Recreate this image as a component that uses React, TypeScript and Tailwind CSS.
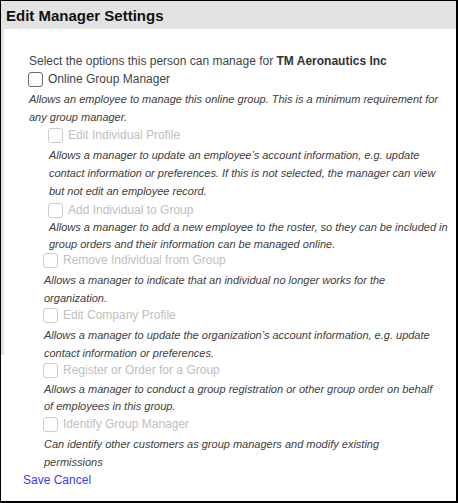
import React from "react";

type Item = {
  label: string;
  indent: string;
  rowMt: string;
  descMt: string;
  leading: string;
  rowH: string;
  desc: string[];
  enabled?: boolean;
};

const items: Item[] = [
  {
    label: "Online Group Manager",
    indent: "pl-[24px]",
    rowMt: "mt-0",
    descMt: "mt-[2px]",
    leading: "leading-[18px]",
    rowH: "h-[18px]",
    desc: [
      "Allows an employee to manage this online group. This is a minimum requirement for",
      "any group manager.",
    ],
    enabled: true,
  },
  {
    label: "Edit Individual Profile",
    indent: "pl-[44px]",
    rowMt: "mt-0",
    descMt: "mt-[2px]",
    leading: "leading-[18px]",
    rowH: "h-[18px]",
    desc: [
      "Allows a manager to update an employee\u2019s account information, e.g. update",
      "contact information or preferences. If this is not selected, the manager can view",
      "but not edit an employee record.",
    ],
  },
  {
    label: "Add Individual to Group",
    indent: "pl-[44px]",
    rowMt: "mt-[1px]",
    descMt: "mt-0",
    leading: "leading-[17px]",
    rowH: "h-[18px]",
    desc: [
      "Allows a manager to add a new employee to the roster, so they can be included in",
      "group orders and their information can be managed online.",
    ],
  },
  {
    label: "Remove Individual from Group",
    indent: "pl-[39px]",
    rowMt: "mt-[-1px]",
    descMt: "mt-[3px]",
    leading: "leading-[18px]",
    rowH: "h-[16px]",
    desc: [
      "Allows a manager to indicate that an individual no longer works for the",
      "organization.",
    ],
  },
  {
    label: "Edit Company Profile",
    indent: "pl-[39px]",
    rowMt: "mt-0",
    descMt: "mt-[3px]",
    leading: "leading-[18px]",
    rowH: "h-[16px]",
    desc: [
      "Allows a manager to update the organization\u2019s account information, e.g. update",
      "contact information or preferences.",
    ],
  },
  {
    label: "Register or Order for a Group",
    indent: "pl-[39px]",
    rowMt: "mt-0",
    descMt: "mt-[3px]",
    leading: "leading-[17px]",
    rowH: "h-[16px]",
    desc: [
      "Allows a manager to conduct a group registration or other group order on behalf",
      "of employees in this group.",
    ],
  },
  {
    label: "Identify Group Manager",
    indent: "pl-[39px]",
    rowMt: "mt-[1px]",
    descMt: "mt-[3px]",
    leading: "leading-[18px]",
    rowH: "h-[16px]",
    desc: [
      "Can identify other customers as group managers and modify existing",
      "permissions",
    ],
  },
];

function Box({ enabled }: { enabled?: boolean }) {
  return (
    <span
      className={
        enabled
          ? "inline-block w-[15px] h-[15px] rounded-[3px] border border-[#6b6b6b] bg-white shrink-0"
          : "inline-block w-[15px] h-[15px] rounded-[3px] border border-[#cccccc] bg-white shrink-0"
      }
    />
  );
}

export default function App() {
  return (
    <div
      className="w-[458px] h-[503px] bg-white border-t border-l border-r-2 border-b-2 border-black overflow-hidden"
      style={{ fontFamily: '"Liberation Sans", Arial, sans-serif' }}
    >
      <div className="h-[28px] bg-[#e3e3e3] flex items-center pl-[5px]">
        <span className="text-[15px] font-bold text-[#111] leading-none">Edit Manager Settings</span>
      </div>
      <div className="flex">
        <div className="w-[3px] h-[326px] bg-[#e3e3e3] shrink-0" />
        <div className="flex-1 flex flex-col pt-[24px]">
          <div className="pl-[25px] text-[12px] leading-[17px] text-[#444]">
            Select the options this person can manage for{" "}
            <span className="font-bold text-[#333]">TM Aeronautics Inc</span>
          </div>
          {items.map((it) => (
            <div key={it.label} className={`${it.indent} ${it.rowMt} flex flex-col`}>
              <div className={`flex items-center gap-[5px] ${it.rowH}`}>
                <Box enabled={it.enabled} />
                <span
                  className={
                    it.enabled
                      ? "text-[12px] leading-none text-[#444]"
                      : "text-[12px] leading-none text-[#c0c0c0]"
                  }
                >
                  {it.label}
                </span>
              </div>
              <div className={`${it.descMt} ${it.leading} pl-[1px] text-[11px] italic text-[#404040]`}>
                {it.desc.map((d) => (
                  <div key={d}>{d}</div>
                ))}
              </div>
            </div>
          ))}
          <div className="pl-[19px] text-[12px] leading-[18px] text-[#3b3bf5]">
            <a className="cursor-pointer">Save</a> <a className="cursor-pointer">Cancel</a>
          </div>
        </div>
      </div>
    </div>
  );
}
